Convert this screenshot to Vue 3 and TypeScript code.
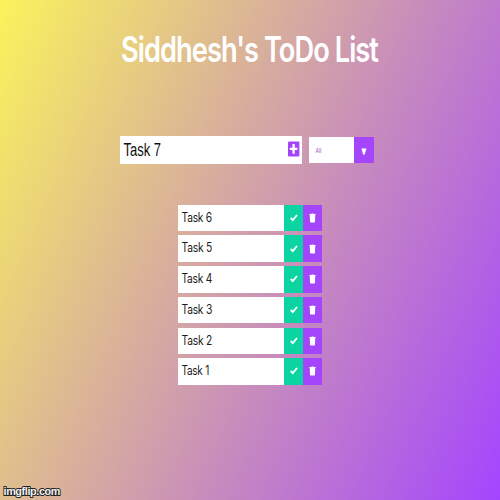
<script setup lang="ts">
import { ref } from 'vue'

interface Task {
  id: number
  title: string
  width: number
}

const draft = ref('Task 7')
const filter = ref('All')
const tasks = ref<Task[]>([
  { id: 6, title: 'Task 6', width: 30.5 },
  { id: 5, title: 'Task 5', width: 30.5 },
  { id: 4, title: 'Task 4', width: 30.5 },
  { id: 3, title: 'Task 3', width: 30.5 },
  { id: 2, title: 'Task 2', width: 30.5 },
  { id: 1, title: 'Task 1', width: 27.5 },
])
</script>

<template>
  <main class="page">
    <header class="header">
      <svg class="title" width="400" height="50" role="heading">
        <text x="71" y="37" textLength="257" lengthAdjust="spacingAndGlyphs">Siddhesh's ToDo List</text>
      </svg>
    </header>

    <form class="controls" @submit.prevent>
      <div class="field">
        <svg class="draft" width="60" height="28">
          <text x="3.5" y="20" textLength="37.5" lengthAdjust="spacingAndGlyphs">{{ draft }}</text>
        </svg>
        <svg class="add" width="12" height="16" viewBox="0 0 12 16">
          <rect x="0" y="0.5" width="11.4" height="15" rx="1.2" fill="#a445fb" />
          <path d="M5.6 3.1v9.6M1.8 7.9h7.6" stroke="#fff" stroke-width="2.3" />
        </svg>
      </div>
      <div class="select">
        <svg class="choice" width="45" height="26">
          <text x="6.5" y="16" textLength="6" lengthAdjust="spacingAndGlyphs">{{ filter }}</text>
        </svg>
        <div class="arrow">
          <svg width="6" height="7" viewBox="0 0 6 7"><path d="M.4.5h5L3.7 6.5H2.1z" fill="#fff" /></svg>
        </div>
      </div>
    </form>

    <ul class="list">
      <li v-for="task in tasks" :key="task.id" class="task">
        <svg class="name" width="106" height="26">
          <text x="3.5" y="17" :textLength="task.width" lengthAdjust="spacingAndGlyphs">{{ task.title }}</text>
        </svg>
        <div class="action done">
          <svg width="8" height="8" viewBox="0 0 8 8">
            <path d="M.8 4 2.8 6.1 7 1" fill="none" stroke="#fff" stroke-width="1.9" />
          </svg>
        </div>
        <div class="action remove">
          <svg width="7" height="10" viewBox="0 0 7 10">
            <path d="M.4 1h1.8L2.6.4h1.8l.4.6h1.8v1H.4zM.8 2h5.4L6 8.8Q5.9 9.5 5.3 9.5H1.7Q1.1 9.5 1 8.8z" fill="#fff" />
          </svg>
        </div>
      </li>
    </ul>

    <svg class="watermark" width="64" height="18">
      <text x="3.5" y="12.5" textLength="56.5" lengthAdjust="spacingAndGlyphs">imgflip.com</text>
    </svg>
  </main>
</template>

<style>
body {
  margin: 0;
}
</style>

<style scoped>
.page {
  position: relative;
  box-sizing: border-box;
  width: 500px;
  height: 500px;
  padding-top: 25px;
  overflow: hidden;
  background: linear-gradient(114deg, #faf35c, #a445ff);
  font-family: Inter, "Liberation Sans", sans-serif;
}
svg {
  display: block;
}
.header {
  display: flex;
  justify-content: center;
  height: 50px;
}
.title text {
  font-size: 35px;
  font-weight: 600;
  letter-spacing: -1.2px;
  fill: #fff;
}
.controls {
  display: flex;
  align-items: center;
  gap: 7px;
  margin: 61px 0 0 120px;
}
.field {
  display: flex;
  align-items: center;
  justify-content: space-between;
  box-sizing: border-box;
  width: 182px;
  height: 28px;
  padding-right: 2px;
  background: #fff;
}
.draft text {
  font-family: "Liberation Sans", Arial, sans-serif;
  font-size: 18px;
  fill: #111;
}
.add {
  margin: -3px 0 0;
}
.select {
  display: flex;
  width: 65px;
  height: 26.5px;
  background: #fff;
}
.choice text {
  font-size: 6px;
  fill: #9c50bd;
}
.arrow {
  display: flex;
  align-items: center;
  justify-content: center;
  width: 20px;
  padding-top: 3px;
  box-sizing: border-box;
  background: #a445fb;
}
.list {
  display: flex;
  flex-direction: column;
  gap: 4.2px;
  width: 144px;
  margin: 40.8px 0 0 178px;
  padding: 0;
  list-style: none;
}
.task {
  display: flex;
  height: 26.5px;
  background: #fff;
}
.name text {
  font-size: 12.5px;
  letter-spacing: -0.3px;
  fill: #1c1c20;
}
.action {
  display: flex;
  align-items: center;
  justify-content: center;
  width: 19px;
}
.done {
  background: #0bd4a2;
}
.remove {
  background: #a445fb;
}
.watermark {
  position: absolute;
  left: 0;
  bottom: 0;
}
.watermark text {
  font-family: "Liberation Sans", Arial, sans-serif;
  font-size: 11.5px;
  font-weight: 700;
  letter-spacing: -0.4px;
  fill: #f4f4f4;
  stroke: #222;
  stroke-width: 2px;
  stroke-linejoin: round;
  paint-order: stroke;
}
</style>
